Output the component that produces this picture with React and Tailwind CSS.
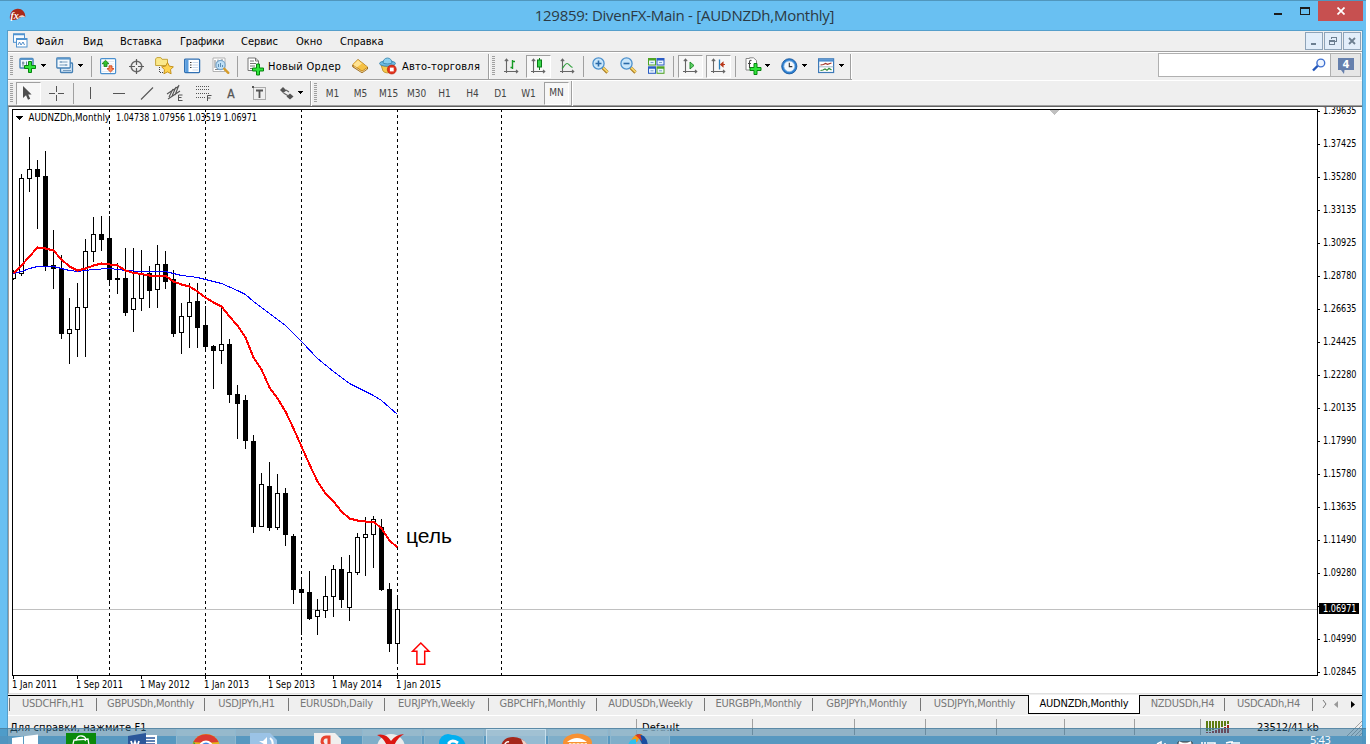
import React from "react";

const TAHOMA = "font-['DejaVu_Sans_Condensed','Noto_Sans',sans-serif]";

/* ---------- toolbar primitives ---------- */
const Grip = () => (
  <svg width="4" height="20" shapeRendering="crispEdges">
    {[0, 2, 4, 6, 8, 10, 12, 14, 16, 18].map((y) => (
      <rect key={y} x="0" y={y} width="3" height="1" fill="#a0a0a0" />
    ))}
  </svg>
);
const Sep = () => <div className="h-[21px] w-px bg-[#a0a0a0]" />;
const EndSep = () => <div className="h-[25px] w-[2px] border-l border-[#a0a0a0] bg-white" />;
const Caret = () => (
  <svg width="6" height="4" shapeRendering="crispEdges">
    <path d="M0 0h5v1h-5zM1 1h3v1h-3zM2 2h1v1h-1z" fill="#000" />
  </svg>
);
const Pressed = ({ children }) => (
  <div className="flex h-[23px] w-[25px] items-center justify-center border border-t-[#a0a0a0] border-r-white border-b-white border-l-[#a0a0a0] bg-[#f7f7f7]">
    {children}
  </div>
);
const Slot = ({ w, children }) => <div className={`flex shrink-0 items-center ${w}`}>{children}</div>;

const Plus = ({ x, y }) => (
  <path
    transform={`translate(${x} ${y})`}
    d="M4.5.5h3v4h4v3h-4v4h-3v-4h-4v-3h4z"
    fill="#2fe43a"
    stroke="#07840f"
  />
);

const I = ({ w = 18, h = 18, children }) => (
  <svg width={w} height={h} viewBox={`0 0 ${w} ${h}`} fill="none" className="block shrink-0">
    {children}
  </svg>
);

const NewChart = () => (
  <I w={18} h={18}>
    <rect x="1" y="1.500" width="13" height="9.500" rx=".8" fill="#f1f8fe" stroke="#4580b5" strokeWidth="1.400" />
    <path d="M1 2.200h13" stroke="#5b97cc" strokeWidth="1.600" />
    <path d="M4 4.500v5M3 6h2.500M7.500 4.500v4" stroke="#50708c" strokeWidth=".9" />
    <Plus x={5} y={4} />
  </I>
);
const Profiles = () => (
  <I w={18} h={18}>
    <rect x="4.500" y="6" width="12" height="9.500" rx=".8" fill="#d7e9f8" stroke="#4580b5" strokeWidth="1.300" />
    <rect x=".8" y="1" width="13.400" height="10" rx=".8" fill="#f3f9fe" stroke="#4580b5" strokeWidth="1.300" />
    <path d="M1 1.800h13" stroke="#5b97cc" strokeWidth="1.600" />
    <path d="M3.500 5h8M3.500 8h8M5 4v2M10 7v2M7 13.500h8" stroke="#6b93b8" strokeWidth=".9" />
  </I>
);
const Market = () => (
  <I w={17} h={17}>
    <rect x=".6" y=".6" width="15" height="15" rx="1" fill="#fff" stroke="#4a90cf" strokeWidth="1.200" />
    <path d="M2 3.500h12M2 6h12M2 8.500h12M2 11h12M2 13.500h12" stroke="#d9e3ec" strokeWidth=".7" />
    <path d="M5.500 2.300l3.500 3.400h-2v2.800h-3v-2.800h-2z" fill="#35c12d" stroke="#187d14" strokeWidth=".8" />
    <path d="M10.500 14l-3.500-3.400h2v-2.800h3v2.800h2z" fill="#ff8a58" stroke="#c43a14" strokeWidth=".8" />
  </I>
);
const Crosshair = () => (
  <I w={17} h={17}>
    <circle cx="8.500" cy="8.500" r="5.300" stroke="#6a6a6a" strokeWidth="1.500" />
    <path d="M8.500 1v6M8.500 10v6M1 8.500h6M10 8.500h6" stroke="#5c5c5c" strokeWidth="1.200" />
  </I>
);
const Star = () => (
  <I w={19} h={18}>
    <path d="M.600 2l1.200-1.400h4l1.200 1.700h5.500v6.200h-11.900z" fill="#fbe88a" stroke="#c5a43a" />
    <path d="M4.500 10v6M5 15.500h4" stroke="#444" strokeDasharray="1 1" />
    <path d="M12.500 5.500l1.900 3.700 4 .600-2.900 2.900.600 4.100-3.600-1.900-3.600 1.900.600-4.100-2.900-2.900 4-.600z" fill="#ffd34e" stroke="#bf8a12" strokeWidth=".9" />
  </I>
);
const Terminal = () => (
  <I w={17} h={16}>
    <rect x=".6" y="1.100" width="15" height="13.500" rx="1" fill="#fff" stroke="#2f6fb2" strokeWidth="1.300" />
    <rect x="1.200" y="2" width="3.300" height="12" fill="#5b9ede" />
    <path d="M6 4.500h1.500M6 7h1.500M6 9.500h1.500" stroke="#222" strokeWidth=".9" />
    <path d="M8.500 4.500h5.500M8.500 7h5.500M8.500 9.500h5.500M8.500 12h5.500" stroke="#c3d4e6" strokeWidth=".9" />
  </I>
);
const Tester = () => (
  <I w={18} h={18}>
    <path d="M1 1h12v13.500h-12z" fill="#fff" stroke="#aaa" strokeWidth=".9" />
    <path d="M3 3v8M6 2.500v3M10 2v4M3 12.500h6" stroke="#777" strokeWidth=".9" />
    <circle cx="8.500" cy="8" r="4.600" fill="#bfe0f7" stroke="#7aa6ca" strokeWidth="1.200" />
    <path d="M6.500 10v-3M8.500 10v-4M10.500 10v-2" stroke="#5b8db5" />
    <path d="M12.300 11.800l4 4" stroke="#d59c2b" strokeWidth="2.400" strokeLinecap="round" />
  </I>
);
const NewOrder = () => (
  <I w={18} h={19}>
    <path d="M1 1h7.500l3 3v9.500h-10.500z" fill="#fff" stroke="#777" />
    <path d="M8.500 1v3h3M3 4h4M3 6.500h6M3 9h5M3 11.500h3" stroke="#666" strokeWidth=".9" />
    <Plus x={5} y={6.5} />
  </I>
);
const MetaEditor = () => (
  <I w={17} h={16}>
    <path d="M6 1.500l9.500 7.500v2l-5.500 3.800-9.300-6v-2z" fill="#b97910" stroke="#8e5a0b" strokeWidth=".8" />
    <path d="M6 1.500l9.500 7.500-5.500 3.800-9.300-6.500z" fill="#f5c145" />
    <path d="M6 2.200l4 3.200-5.200 4-3.500-2.700z" fill="#ffe394" />
    <path d="M1.500 8.200l8.500 5.800 5-3.500" stroke="#fff3c7" strokeWidth=".7" />
  </I>
);
const AutoTrade = () => (
  <I w={18} h={18}>
    <path d="M2 8c2 2 10 2 13 0l-2 6c-2 2.500-7 2.500-9 0z" fill="#f4c94e" stroke="#b88c22" strokeWidth=".8" />
    <ellipse cx="8.500" cy="6.500" rx="8" ry="2.700" fill="#6ebbe2" stroke="#3580a8" strokeWidth=".8" />
    <path d="M4 6c0-3 2-5 4.500-5s4.500 2 4.500 5c-2 1.200-7 1.200-9 0z" fill="#8bd0ef" stroke="#3580a8" strokeWidth=".8" />
    <circle cx="12.800" cy="12.500" r="4.500" fill="#e2331d" stroke="#b21c0a" strokeWidth=".6" />
    <rect x="10.900" y="10.600" width="3.800" height="3.800" fill="#fff" />
  </I>
);
const Axes = () => (
  <path d="M2.500 16v-13.500M.800 4.200l1.700-2 1.700 2M0 14.500h13.500M12 12.800l1.800 1.700-1.800 1.700" stroke="#666" strokeWidth="1.100" />
);
const BarsIcon = () => (
  <I w={16} h={18}>
    <Axes />
    <path d="M8.500 3v9M6.500 10.500h2M8.500 4.500h2.500" stroke="#159a24" strokeWidth="1.400" />
  </I>
);
const CandleIcon = () => (
  <I w={16} h={18}>
    <Axes />
    <path d="M8.500 1v12" stroke="#0a7a18" />
    <rect x="6.500" y="3" width="4" height="7" fill="#38d64a" stroke="#0a7a18" />
  </I>
);
const LineIcon = () => (
  <I w={16} h={18}>
    <Axes />
    <path d="M2 11.500c2-1.500 3-5 5-5s2.500 2.500 5.500 4" stroke="#2f9f3c" strokeWidth="1.200" />
  </I>
);
const Zoom = ({ plus }) => (
  <I w={18} h={18}>
    <path d="M10.500 10.500l5 5" stroke="#a87a22" strokeWidth="3.200" />
    <path d="M11 10.500l4.700 4.700" stroke="#f6d568" strokeWidth="1.800" />
    <circle cx="6.500" cy="6.500" r="5.600" fill="#c9e6fa" stroke="#4b90cc" strokeWidth="1.300" />
    <path d={plus ? "M3.500 6.500h6M6.500 3.500v6" : "M3.500 6.500h6"} stroke="#2a6aa8" strokeWidth="1.600" />
  </I>
);
const Tile = () => (
  <I w={17} h={17}>
    <rect x="0" y="0" width="8" height="7.500" fill="#4ea423" />
    <rect x="8.500" y="0" width="8" height="7.500" fill="#2a5cc4" />
    <rect x="0" y="8.300" width="8" height="7.500" fill="#2a5cc4" />
    <rect x="8.500" y="8.300" width="8" height="7.500" fill="#4ea423" />
    <path d="M1 2.500h6v4h-6zM9.500 2.500h6v4h-6zM1 10.800h6v4h-6zM9.500 10.800h6v4h-6z" fill="#eaf4ff" />
    <path d="M2.500 4.500h3M11 4.500h3M2.500 12.800h3M11 12.800h3" stroke="#7aa2c8" />
  </I>
);
const ScrollIcon = () => (
  <I w={16} h={18}>
    <Axes />
    <path d="M7 5l4 3.500-4 3.500z" fill="#5fd267" stroke="#15861f" strokeWidth=".9" />
  </I>
);
const ShiftIcon = () => (
  <I w={16} h={18}>
    <Axes />
    <path d="M8.500 2.500v10" stroke="#2a7eb8" strokeWidth="1.300" />
    <path d="M14 7.500h-4M12 5.500l-2.300 2 2.300 2z" stroke="#b8381a" strokeWidth="1.100" fill="#b8381a" />
  </I>
);
const Indicator = () => (
  <I w={18} h={18}>
    <path d="M1 1.500h3.500v-.700h4l3 2.700v9.500h-10.500z" fill="#fff" stroke="#888" />
    <path d="M6.500 3.500c-1.500-.700-2 .500-2 2v5.500M3 6.500h3" stroke="#444" strokeWidth="1.100" />
    <Plus x={4.5} y={6} />
  </I>
);
const Clock = () => (
  <I w={17} h={17}>
    <circle cx="8.300" cy="8.300" r="7.600" fill="#2c7fd1" stroke="#145296" strokeWidth=".8" />
    <circle cx="8.300" cy="8.300" r="5.400" fill="#f3f8fd" stroke="#8dbbe6" strokeWidth=".8" />
    <path d="M8.300 4.800v3.800h3" stroke="#333" strokeWidth="1.100" />
  </I>
);
const Template = () => (
  <I w={17} h={16}>
    <rect x=".6" y=".8" width="15" height="13.700" fill="#fff" stroke="#3d7ab8" strokeWidth="1.200" />
    <path d="M1 2.400h14.500" stroke="#4e8fd0" strokeWidth="2.400" />
    <path d="M1 8.800h14.500" stroke="#8fa9c2" strokeWidth=".8" />
    <path d="M2.500 7l3-.5 2-1 2 .800 4-1.300" stroke="#a3342a" strokeWidth="1.200" />
    <path d="M2.500 12.500l2.500-.500 2-1 2 1.300 2-2 2.500 1.700" stroke="#2f8a38" strokeWidth="1.200" />
  </I>
);
const Cursor = () => (
  <svg width="12" height="16" className="mr-[3px] block shrink-0">
    <path d="M2 1v12l3-2.800 2 4.500 2.200-1-2-4.300h3.400z" fill="#4f4f4f" />
  </svg>
);

/* ---------- chart data: [high, low, bodyTop, bodyBottom, filled] in y pixels ---------- */
const CANDLES = [
  [270, 279, 273, 278, 0], [174, 275, 178, 273, 0], [137, 191, 169, 178, 0], [160, 228, 169, 176, 1],
  [151, 270, 176, 265, 1], [230, 288, 265, 268, 1], [255, 338, 268, 333, 1], [298, 363, 329, 333, 0],
  [283, 356, 307, 329, 0], [239, 356, 251, 307, 0], [217, 261, 234, 251, 0], [216, 250, 234, 239, 1],
  [216, 285, 238, 279, 1], [263, 293, 278, 279, 1], [248, 315, 278, 312, 1], [248, 331, 298, 309, 0],
  [250, 310, 273, 298, 0], [266, 307, 273, 290, 1], [245, 307, 264, 289, 0], [251, 288, 264, 281, 1],
  [270, 336, 279, 333, 1], [303, 353, 316, 332, 0], [283, 347, 302, 316, 0], [283, 347, 301, 327, 1],
  [306, 349, 325, 346, 1], [345, 388, 346, 350, 1], [307, 363, 344, 350, 0], [339, 402, 344, 394, 1],
  [385, 438, 394, 403, 1], [395, 448, 400, 440, 1], [435, 532, 441, 526, 1], [473, 526, 484, 526, 0],
  [462, 530, 486, 527, 1], [474, 529, 493, 527, 0], [488, 545, 493, 534, 1], [534, 603, 536, 589, 1],
  [577, 634, 589, 592, 1], [571, 619, 592, 618, 1], [599, 634, 610, 616, 0], [576, 617, 596, 610, 0],
  [565, 616, 569, 596, 0], [557, 607, 569, 599, 1], [555, 620, 572, 607, 0], [533, 574, 537, 572, 0],
  [517, 575, 534, 537, 0], [516, 567, 519, 534, 0], [519, 590, 527, 589, 1], [583, 651, 589, 643, 1],
  [595, 662, 609, 643, 0],
];
const FAST_MA =
  "13,273 21,265 29,256 37,247 45,248 53,250 61,259 69,266 77,270 85,268 93,265 101,263 109,264 117,265 125,270 133,272.500 141,273.500 149,275 165,275 173,281 181,284 189,286 197,291 205,297 213,302 221,306 229,316 237,325 245,337 253,357 261,369 269,387 277,398 285,411 293,428 301,446 309,464 317,481 325,493 333,501 341,511 349,518 357,520 365,521 373,521 381,528 389,540 397,547";
const SLOW_MA =
  "13,273 21,271 29,268 37,266 53,266 61,268 69,270 77,271 85,270 93,269 109,268 125,270 141,271 165,271 181,275 197,277 209,280 221,283 237,290 245,294 253,301 269,313 285,325 301,341 317,358 333,371 349,383 365,391 373,395 381,400 389,407 397,414";
const PRICES = ["1.39635", "1.37425", "1.35280", "1.33135", "1.30925", "1.28780", "1.26635", "1.24425", "1.22280", "1.20135", "1.17990", "1.15780", "1.13635", "1.11490", "1.09280", null, "1.04990", "1.02845"];
const DATES = ["1 Jan 2011", "1 Sep 2011", "1 May 2012", "1 Jan 2013", "1 Sep 2013", "1 May 2014", "1 Jan 2015"];
const DATE_W = [45, 47, 50, 45, 47, 50, 45];

const Chart = () => (
  <svg width="1349" height="586" viewBox="11 107 1349 586" className={`block ${TAHOMA}`} fontSize="10">
    <g shapeRendering="crispEdges">
      {[109, 205, 301, 397, 501].map((x) => (
        <path key={x} d={`M${x + 0.5} 109V675`} stroke="#000" strokeDasharray="3 3" />
      ))}
      <path d="M13 609.500H1317" stroke="#c0c0c0" />
      {CANDLES.map(([hi, lo, top, bot, filled], i) => {
        const x = 13 + i * 8;
        const left = i === 0 ? 12 : x - 2;
        return (
          <g key={i}>
            <rect x={x} y={hi} width="1" height={lo - hi + 1} fill="#000" />
            <rect x={left} y={top} width={x + 3 - left} height={bot - top + 1} fill="#000" />
            {!filled && <rect x={left + 1} y={top + 1} width={x + 1 - left} height={bot - top - 1} fill="#fff" />}
          </g>
        );
      })}
      <polyline points={SLOW_MA} transform="translate(.5 .5)" fill="none" stroke="#0000ff" />
      <polyline points={FAST_MA} transform="translate(.5 .5)" fill="none" stroke="#ff0000" strokeWidth="2" />
      <path d="M12.500 675V109.500H1317.500V675.500H12" fill="none" stroke="#000" />
      {PRICES.map((p, i) => (
        <rect key={i} x="1318" y={111 + 33 * i} width="2" height="1" fill="#000" />
      ))}
      {DATES.map((d, i) => (
        <rect key={d} x={13 + 64 * i} y="676" width="1" height="3" fill="#000" />
      ))}
      <path d="M1050 110h9v1h-1v1h-1v1h-1v1h-1v1h-1v-1h-1v-1h-1v-1h-1v-1h-1z" fill="#c0c0c0" />
      <path d="M16 116h7v1h-1v1h-1v1h-1v1h-1v-1h-1v-1h-1v-1h-1z" fill="#000" />
    </g>
    <text x="28.500" y="121" textLength="81.500" lengthAdjust="spacingAndGlyphs">AUDNZDh,Monthly</text>
    <text x="116" y="121" textLength="141" lengthAdjust="spacingAndGlyphs">1.04738 1.07956 1.03519 1.06971</text>
    {PRICES.map((p, i) =>
      p ? (
        <text key={p} x="1323" y={114 + 33 * i} textLength="33.500" lengthAdjust="spacingAndGlyphs">{p}</text>
      ) : null
    )}
    <rect x="1319" y="603" width="40" height="11" fill="#000" />
    <text x="1323" y="612" fill="#fff" textLength="33.500" lengthAdjust="spacingAndGlyphs">1.06971</text>
    {DATES.map((d, i) => (
      <text key={d} x={12 + 64 * i} y="688" textLength={DATE_W[i]} lengthAdjust="spacingAndGlyphs">{d}</text>
    ))}
    <text x="406" y="543" fontSize="21" fontFamily="Liberation Sans" textLength="46" lengthAdjust="spacingAndGlyphs">цель</text>
    <path d="M420.800 643l8.200 8.200h-4.300v13h-7.800v-13h-4.300z" fill="#fff" stroke="#ff0000" strokeWidth="1.500" />
  </svg>
);

/* ---------- tabs ---------- */
const TABS = [
  ["USDCHFh,H1", "w-[87px]"], ["GBPUSDh,Monthly", "w-[108px]"], ["USDJPYh,H1", "w-[84px]"],
  ["EURUSDh,Daily", "w-[96px]"], ["EURJPYh,Weekly", "w-[104px]"], ["GBPCHFh,Monthly", "w-[108px]"],
  ["AUDUSDh,Weekly", "w-[108px]"], ["EURGBPh,Monthly", "w-[108px]"], ["GBPJPYh,Monthly", "w-[108px]"],
  ["USDJPYh,Monthly", "w-[108px]"], ["AUDNZDh,Monthly", "w-[112px]", true], ["NZDUSDh,H4", "w-[84px]"],
  ["USDCADh,H4", "w-[88px]"],
];

const Tab = ({ label, w, active, plain }) =>
  active ? (
    <div className={`-mt-px flex h-[19px] shrink-0 justify-center border-x border-b border-black bg-white pt-[2px] tracking-[-.24px] text-black ${w}`}>{label}</div>
  ) : (
    <div className={`flex h-[18px] shrink-0 pt-[1px] text-[#777] ${w}`}>
      <div className={`mt-[1px] h-[13px] w-px ${plain ? "bg-transparent" : "bg-[#777]"}`} />
      <div className="flex-1 text-center tracking-[-.24px]">{label}</div>
    </div>
  );

const MdiButton = ({ children }) => (
  <div className="flex h-[18px] w-[18px] items-center justify-center border border-[#8ea3b8] bg-[#e3eefa]">
    <svg width="10" height="10" shapeRendering="crispEdges" fill="none" stroke="#6d7f91">{children}</svg>
  </div>
);

/* ---------- taskbar ---------- */
const TaskButton = ({ hot, children }) => (
  <div className={`flex h-4 w-[60px] shrink-0 justify-center border border-b-0 ${hot ? "border-[#c7dfec] bg-[#a5c4d6]/80" : "border-[#8fb8cf] bg-[#9abccf]/60"}`}>{children}</div>
);
const Ic = ({ children, w = 30 }) => (
  <svg width={w} height="16" viewBox={`0 0 ${w} 16`} className="block shrink-0 overflow-hidden">{children}</svg>
);

export default function App() {
  return (
    <div className="h-[744px] w-[1370px] overflow-hidden bg-white">
      <div className="relative flex h-[744px] w-[1366px] flex-col overflow-hidden border-t border-[#5096bd] bg-[#69c0f2]">
        {/* title bar */}
        <div className="flex h-[29px] shrink-0">
          <div className="w-[300px] pt-[7px] pl-[9px]">
            <svg width="18" height="14" viewBox="0 0 18 14">
              <path d="M1 11.500C0 4 5 .5 9 .8c4 0 7.500 3 7.300 8.500-2-.8-3.500-1-6 .700-2 1.500-5 2.800-9.300 1.500z" fill="#a92a1b" />
              <path d="M9 9.800c1.500-2.500 5-3.800 7.300-.500-2-.5-4.500-.3-7.300.500z" fill="#f3d2c8" />
              <text x="1.500" y="11" fontSize="10" fontStyle="italic" fontWeight="bold" fill="#fff" fontFamily="Liberation Serif">fx</text>
            </svg>
          </div>
          <div className="flex flex-1 justify-center pt-[3px] pl-[3px] font-['Open_Sans','Noto_Sans',sans-serif] text-[15px] leading-[22px] tracking-[-.27px] text-[#2c3a44]">
            <span className="whitespace-nowrap">129859: DivenFX-Main - [AUDNZDh,Monthly]</span>
          </div>
          <div className="flex w-[300px] justify-end pr-[3px]">
            <svg width="44" height="20" shapeRendering="crispEdges">
              <rect x="0" y="12" width="8" height="2" fill="#1c1c1c" />
              <path d="M26 6h10v8h-10zM27 8v5h8v-5z" fill="#1c1c1c" fillRule="evenodd" />
            </svg>
            <div className="flex h-[20px] w-[45px] items-center justify-center bg-[#c75050]">
              <svg width="8" height="8"><path d="M.5.5l7 7M7.500.5l-7 7" stroke="#fff" strokeWidth="1.700" /></svg>
            </div>
          </div>
        </div>

        {/* client area */}
        <div className="ml-[7px] flex w-[1356px] flex-1 flex-col border-x border-t border-[#559fcb] bg-[#efefef]">
          <div className={`flex h-[21px] shrink-0 items-center border-b border-[#a0a0a0] pl-[5px] text-[11px] text-black ${TAHOMA}`}>
            <svg width="15" height="15" fill="none" className="-mt-px">
              <rect x=".5" y=".8" width="11" height="8.500" fill="#f5faff" stroke="#4f92cf" />
              <rect x="3.500" y="5.500" width="10.500" height="8.500" fill="#fff" stroke="#4f92cf" />
              <path d="M.5 1.500h11M3.500 6.300h10.500" stroke="#4f92cf" strokeWidth="1.400" />
              <path d="M5 12l1.500-3 1.500 3 2-3 1.500 3" stroke="#3f82c4" strokeWidth=".9" />
            </svg>
            <div className="flex pt-[2px] pl-[8px]">
              <span className="w-[47px] tracking-[.1px]">Файл</span>
              <span className="w-[37px]">Вид</span>
              <span className="w-[60px]">Вставка</span>
              <span className="w-[61px] tracking-[-.2px]">Графики</span>
              <span className="w-[55px]">Сервис</span>
              <span className="w-[44px]">Окно</span>
              <span className="flex-1">Справка</span>
            </div>
            <div className="ml-auto flex gap-px pr-[1px]">
              <MdiButton><path d="M2 7.500h5M2 8.500h5" /></MdiButton>
              <MdiButton><path d="M3.500 3v-1.500h5v4h-1.500M1.500 4.500h5v4h-5zM1.500 5.500h5" /></MdiButton>
              <MdiButton><path d="M2 2l6 6M8 2l-6 6" strokeWidth="1.800" shapeRendering="auto" /></MdiButton>
            </div>
          </div>

          {/* standard toolbar */}
          <div className="flex h-[28px] shrink-0 border-t border-white">
            <div className="flex h-[27px] items-center border-b border-[#a0a0a0] pl-[2px]">
              <Slot w="w-[9px]"><Grip /></Slot>
              <Slot w="w-[22px]"><NewChart /></Slot>
              <Slot w="w-[15px]"><Caret /></Slot>
              <Slot w="w-[22px]"><Profiles /></Slot>
              <Slot w="w-[13px]"><Caret /></Slot>
              <Slot w="w-[9px]"><Sep /></Slot>
              <Slot w="w-[28px]"><Market /></Slot>
              <Slot w="w-[27px]"><Crosshair /></Slot>
              <Slot w="w-[29px]"><Star /></Slot>
              <Slot w="w-[28px]"><Terminal /></Slot>
              <Slot w="w-[25px]"><Tester /></Slot>
              <Slot w="w-[10px]"><Sep /></Slot>
              <Slot w="w-[21px]"><NewOrder /></Slot>
              <Slot w="w-[84px]">
                <span className={`pt-px text-[11px] leading-[14px] tracking-[.28px] whitespace-nowrap text-black ${TAHOMA}`}>Новый Ордер</span>
              </Slot>
              <Slot w="w-[27px]"><MetaEditor /></Slot>
              <Slot w="w-[23px]"><AutoTrade /></Slot>
              <Slot w="w-[86px]">
                <span className={`pt-px text-[11px] leading-[14px] tracking-[.2px] whitespace-nowrap text-black ${TAHOMA}`}>Авто-торговля</span>
              </Slot>
              <Slot w="w-[4px]"><EndSep /></Slot>
              <Slot w="w-[12px]"><Grip /></Slot>
              <Slot w="w-[22px]"><BarsIcon /></Slot>
              <Slot w="w-[34px]"><Pressed><CandleIcon /></Pressed></Slot>
              <Slot w="w-[23px]"><LineIcon /></Slot>
              <Slot w="w-[9px]"><Sep /></Slot>
              <Slot w="w-[28px]"><Zoom plus /></Slot>
              <Slot w="w-[28px]"><Zoom /></Slot>
              <Slot w="w-[25px]"><Tile /></Slot>
              <Slot w="w-[5px]"><Sep /></Slot>
              <Slot w="w-[28px]"><Pressed><ScrollIcon /></Pressed></Slot>
              <Slot w="w-[29px]"><Pressed><ShiftIcon /></Pressed></Slot>
              <Slot w="w-[10px]"><Sep /></Slot>
              <Slot w="w-[20px]"><Indicator /></Slot>
              <Slot w="w-[16px]"><Caret /></Slot>
              <Slot w="w-[21px]"><Clock /></Slot>
              <Slot w="w-[16px]"><Caret /></Slot>
              <Slot w="w-[21px]"><Template /></Slot>
              <Slot w="w-[11px]"><Caret /></Slot>
              <Slot w="w-[2px]"><EndSep /></Slot>
            </div>
            <div className="mr-[1px] ml-auto flex h-[24px] border border-[#b0b0b0]">
              <div className="flex w-[171px] items-center justify-end bg-white pr-[4px]">
                <svg width="14" height="14" fill="none">
                  <path d="M1 12.500l5-5" stroke="#2456b8" strokeWidth="2.400" />
                  <circle cx="8.800" cy="5" r="3.900" fill="#eef5ff" stroke="#3f70d0" strokeWidth="1.400" />
                </svg>
              </div>
              <div className="flex w-[30px] items-center justify-center border-l border-[#b0b0b0] bg-[#e6e6e6]">
                <svg width="16" height="16" viewBox="0 0 16 16" className="mt-[2px]">
                  <path d="M0 0h16v12h-9.500l-.500 4-3-4h-3z" fill="#6680ad" />
                  <text x="8" y="9.500" fontSize="10" fontWeight="bold" fill="#fff" textAnchor="middle" fontFamily="DejaVu Sans">4</text>
                </svg>
              </div>
            </div>
          </div>

          {/* drawing and period toolbar */}
          <div className="flex h-[26px] shrink-0 items-center border-t border-b border-t-white border-b-[#a0a0a0] pl-[2px]">
            <Slot w="w-[6px]"><Grip /></Slot>
            <Slot w="w-[33px]"><Pressed><Cursor /></Pressed></Slot>
            <Slot w="w-[24px]">
              <I w={16} h={16}><path d="M7.500 1v6M7.500 10v6M0 8.500h6M9 8.500h6" stroke="#555" /></I>
            </Slot>
            <Slot w="w-[9px]"><Sep /></Slot>
            <Slot w="w-[29px]"><I w={16} h={16}><path d="M8.500 2v12" stroke="#555" /></I></Slot>
            <Slot w="w-[28px]"><I w={16} h={16}><path d="M2 8.500h12" stroke="#555" /></I></Slot>
            <Slot w="w-[27px]"><I w={16} h={16}><path d="M2 14.500l12-12" stroke="#555" strokeWidth="1.100" /></I></Slot>
            <Slot w="w-[29px]">
              <I w={18} h={18}>
                <path d="M1 10L13 2M2 15L14 7M3 13l4-8M6 12l4-9M9 11l4-10" stroke="#555" strokeWidth="1.100" />
                <path d="M12.500 16.500v-5.500h4M12.500 13.500h3M12 16.500h4.500" stroke="#555" />
              </I>
            </Slot>
            <Slot w="w-[28px]">
              <I w={18} h={18}>
                <path d="M1 2.500h13M1 5.500h13M1 9.500h13M1 13.500h9" stroke="#555" strokeDasharray="1 1" />
                <path d="M12.500 17v-5.500h4M12.500 14h3" stroke="#555" />
              </I>
            </Slot>
            <Slot w="w-[28px]">
              <span className={`w-[16px] pt-px text-center text-[12px] leading-[16px] text-[#555] [-webkit-text-stroke:.3px_#555] ${TAHOMA}`}>A</span>
            </Slot>
            <Slot w="w-[28px]">
              <I w={16} h={16}>
                <rect x="2.500" y="2.500" width="12" height="12" stroke="#666" strokeDasharray="1 1" />
                <path d="M1 1h2v2h-2z" fill="#555" />
                <path d="M5 5.500h7M8.500 5v8" stroke="#555" strokeWidth="1.800" />
              </I>
            </Slot>
            <Slot w="w-[19px]">
              <I w={16} h={16}>
                <path d="M4 2l3.500 3.500-3.500 2.500-3-3z" fill="#555" />
                <path d="M11 8.500l3.500 3-3.500 3-3.500-3z" fill="#555" />
                <path d="M4.500 8l5 3M7 5l3 2" stroke="#666" strokeWidth="1.200" />
              </I>
            </Slot>
            <Slot w="w-[12px]"><Caret /></Slot>
            <Slot w="w-[4px]"><EndSep /></Slot>
            <Slot w="w-[4px]"><Grip /></Slot>
            {["M1", "M5", "M15", "M30", "H1", "H4", "D1", "W1"].map((p) => (
              <span key={p} className={`w-[28px] shrink-0 pt-px pl-px text-center text-[10px] leading-[14px] text-[#444] ${TAHOMA}`}>{p}</span>
            ))}
            <Slot w="w-[29px]">
              <span className={`ml-[2px] text-[10px] leading-[14px] text-[#444] ${TAHOMA}`}><Pressed>MN</Pressed></span>
            </Slot>
            <EndSep />
          </div>

          {/* chart window */}
          <div className="h-[588px] shrink-0 overflow-hidden border-t border-b border-l border-t-[#606060] border-b-[#e0e0e0] border-l-[#a0a0a0] bg-white pl-[2px]">
            <Chart />
          </div>

          {/* chart tabs */}
          <div className={`mt-px flex h-[20px] shrink-0 border-t border-black pl-px text-[11px] leading-[14px] whitespace-nowrap ${TAHOMA}`}>
            {TABS.map(([label, w, active], i) => (
              <Tab key={label} label={label} w={w} active={active} plain={i === 11} />
            ))}
            <div className="mt-[2px] h-[13px] w-px bg-[#777]" />
            <svg width="40" height="16" className="ml-[9px]" fill="none">
              <path d="M1 4l3 4-3 4" stroke="#777" />
              <path d="M16 5v7l-4-3.500z" fill="#999" />
              <path d="M29 5v7l4-3.500z" fill="#000" />
            </svg>
          </div>

          {/* status bar */}
          <div className={`flex h-[24px] shrink-0 border-t border-white pt-[3px] text-[11px] leading-[18px] whitespace-nowrap text-black ${TAHOMA}`}>
            <span className="w-[628px] pl-[2px] tracking-[.1px]">Для справки, нажмите F1</span>
            <div className="h-4 w-[116px] border-l border-[#a0a0a0] pl-[5px] tracking-[.2px]">Default</div>
            <div className="h-4 w-[102px] border-l border-[#a0a0a0]" />
            <div className="h-4 w-[71px] border-l border-[#a0a0a0]" />
            <div className="h-4 w-[71px] border-l border-[#a0a0a0]" />
            <div className="h-4 w-[68px] border-l border-[#a0a0a0]" />
            <div className="h-4 w-[70px] border-l border-[#a0a0a0]" />
            <div className="h-4 w-[66px] border-l border-[#a0a0a0]" />
            <div className="h-4 w-[55px] border-l border-[#a0a0a0] pt-[2px] pl-[5px]">
              <svg width="24" height="13" shapeRendering="crispEdges" className="block">
                {[0, 1, 2, 3, 4, 5, 6, 7].map((i) => {
                  const g = [10, 10, 9, 8, 7, 6, 5, 3][i];
                  return (
                    <g key={i}>
                      <rect x={i * 3} y="0" width="2" height={g} fill="#5e7d12" />
                      <rect x={i * 3} y={g + 1} width="2" height={12 - g - 1} fill="#9b2118" />
                    </g>
                  );
                })}
              </svg>
            </div>
            <span className="pl-[2px] tracking-[-.08px]">23512/41 kb</span>
            <svg width="16" height="16" className="mt-[1px] ml-auto"><path d="M1 16L16 1M5 16L16 5M9 16L16 9M13 16l3-3" stroke="#a0a0a0" /></svg>
          </div>
        </div>

        {/* taskbar laid over the window's lower edge */}
        <div className="absolute bottom-0 left-0 h-4 w-[1366px] border-t border-[#4d7f9f]/80 bg-[#33779f]/50">
          <div className="absolute bottom-0 left-0 h-2 w-full bg-[#5195bf]/90" />
          <div className="relative flex h-4 items-start">
            <div className="w-[66px] pl-[11px]">
              <Ic><path d="M1 9l11-1.500v9h-11zM13 7.300l14-1.800v11h-14z" fill="#fff" /></Ic>
            </div>
            <div className="w-[62px]">
              <Ic><rect x="0" y="4" width="30" height="12" fill="#0b8a0b" /><path d="M10 12q1-6 6-5t3 5M7 15l1-4 14-1 1 6" stroke="#fff" strokeWidth="1.300" fill="none" /></Ic>
            </div>
            <div className="w-[48px]">
              <Ic><path d="M14 6h15v10h-15z" fill="#fff" /><path d="M18 9h9M18 12h9M18 15h9" stroke="#2b579a" strokeWidth="1.500" /><path d="M0 7l18-3v12h-18z" fill="#2b579a" /><path d="M3 12l2 6 2-5 2 5 2-6" fill="none" stroke="#fff" strokeWidth="1.800" /></Ic>
            </div>
            <TaskButton>
              <Ic><circle cx="15" cy="18" r="14" fill="#e3b51c" /><path d="M2.500 12a14 14 0 0 1 25 0l-12.500 1z" fill="#dc3b31" /><path d="M2.500 11l6 10-6 2z" fill="#2f9d47" /><circle cx="15" cy="18" r="6.500" fill="#3f85e8" stroke="#fff" strokeWidth="2" /></Ic>
            </TaskButton>
            <div className="w-[63px] pl-[14px]"><Ic><path d="M0 4h20l7 7v6h-27z" fill="#9bc3e6" /><path d="M9 12h4l4-4v9" fill="#fff" /><path d="M20 9q4 3 2 8" stroke="#fff" fill="none" strokeWidth="2" /></Ic></div>
            <div className="w-[63px] pl-[15px]"><Ic><path d="M0 4h21l6 6v7h-27z" fill="#f1efee" /><path d="M15 17v-9h-3q-4 0-4 5l2 4" fill="none" stroke="#e8432e" strokeWidth="3" /></Ic></div>
            <TaskButton>
              <Ic><circle cx="14" cy="18" r="14" fill="#ececec" /><path d="M0 5q9-2 14 6 4-6 13-7-7 4-10 12h-7q-3-8-10-11z" fill="#dc1712" /></Ic>
            </TaskButton>
            <div className="w-[2px]" />
            <TaskButton><Ic><circle cx="9" cy="13" r="9" fill="#00aff0" /><circle cx="14" cy="18" r="13" fill="#00aff0" /><path d="M19 13q-6-4-9 0 0 3 4 4" stroke="#fff" strokeWidth="3" fill="none" /></Ic></TaskButton>
            <div className="w-[2px]" />
            <TaskButton hot><Ic w={34}><path d="M2 16q2-9 12-9 10 0 15 9z" fill="#a5281b" /><path d="M22 9q5 2 7 7h-4z" fill="#f0d5cc" /><path d="M5 16q2-5 5-4" stroke="#fff" strokeWidth="1.500" fill="none" /></Ic></TaskButton>
            <div className="w-[2px]" />
            <TaskButton><Ic><ellipse cx="14.500" cy="13" rx="14.500" ry="9.500" fill="#f89132" /><path d="M4 12q10-8 20 0z" fill="#fff" /><path d="M6 13h18v3h-18z" fill="#ffe3b8" /><path d="M9 12v4M13 12v4M17 12v4M21 12v4" stroke="#f89132" /></Ic></TaskButton>
            <div className="w-[2px]" />
            <TaskButton><Ic><path d="M6 11q3-8 11-7l-5 8z" fill="#f59a18" /><path d="M12 4q10 0 11 12h-5z" fill="#184da0" /><path d="M10 5l5-1 2 7z" fill="#dd3b22" /><path d="M3 16q1-7 8-7v7z" fill="#2bc0ee" /></Ic></TaskButton>
            <svg width="96" height="16" className="ml-[481px] overflow-hidden" fill="none">
              <path d="M6 15l4-2v4M14 14v3" stroke="#fff" strokeWidth="1.500" />
              <path d="M27 13h14v4h-14z" fill="#eee" stroke="#333" />
              <path d="M28 13l6 3 6-3M51 16v-3M54 16v-3M56 14h8v3M75 14l4-1h3M80 14h9" stroke="#fff" strokeWidth="1.600" />
            </svg>
          </div>
          <span className="absolute top-[5px] left-[1310px] font-['Open_Sans','Noto_Sans',sans-serif] text-[11px] leading-[11px] tracking-[-.3px] text-white">5:43</span>
        </div>
      </div>
    </div>
  );
}
